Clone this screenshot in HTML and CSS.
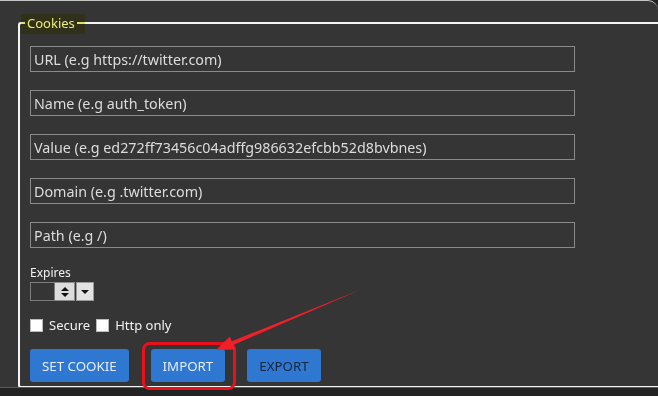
FILE: index.html
```html
<!DOCTYPE html>
<html lang="en">
<head>
  <meta charset="UTF-8">
  <meta name="viewport" content="width=device-width, initial-scale=1.0">
  <title>Cookies</title>
  <link rel="stylesheet" href="styles.css">
</head>
<body>
  <div class="panel">
    <fieldset class="cookies">
      <legend>Cookies</legend>
      <input class="field" type="text" placeholder="URL (e.g https://twitter.com)">
      <input class="field" type="text" placeholder="Name (e.g auth_token)">
      <input class="field" type="text" placeholder="Value (e.g ed272ff73456c04adffg986632efcbb52d8bvbnes)">
      <input class="field" type="text" placeholder="Domain (e.g .twitter.com)">
      <input class="field" type="text" placeholder="Path (e.g /)">

      <div class="expires">
        <label>Expires</label>
        <div class="datebox">
          <span class="date-value"></span>
          <span class="spin">
            <svg width="12" height="16" viewBox="0 0 12 16"><path d="M2 7 L6 3 L10 7 Z M2 9 L6 13 L10 9 Z" fill="#111"/></svg>
          </span>
          <span class="drop">
            <svg width="10" height="8" viewBox="0 0 10 8"><path d="M1 2 L5 6 L9 2 Z" fill="#111"/></svg>
          </span>
        </div>
      </div>

      <div class="checks">
        <label><span class="box"></span>Secure</label>
        <label><span class="box"></span>Http only</label>
      </div>

      <div class="actions">
        <button class="btn">SET COOKIE</button>
        <button class="btn">IMPORT</button>
        <button class="btn dark">EXPORT</button>
      </div>
    </fieldset>
    <div class="highlight"></div>
  </div>

  <svg class="annotation" width="658" height="396" viewBox="0 0 658 396">
    <rect x="143.5" y="343.5" width="91" height="45" rx="6" fill="none" stroke="#e8101a" stroke-width="3"/>
    <polygon points="216,350 229.9,336.6 231.8,341.3 362,289 233.4,344.9 235.3,349.6" fill="#f0202a"/>
  </svg>
</body>
</html>
```

FILE: styles.css
```css
body { margin: 0; background: #232323; overflow: hidden; font-family: "Noto Sans", "Open Sans", sans-serif; color: #f2f2f2; }
.panel { position: relative; height: 388px; box-sizing: border-box; overflow: hidden; background: #353535; border-top: 1px solid #c4c4c4; border-top-right-radius: 10px; border-bottom: 1px solid #5a5a5a; padding-top: 13px; }
.cookies { margin: 0 0 0 18px; width: 650px; height: 374px; box-sizing: border-box; border: 2px solid #f4f4f4; border-right: none; border-radius: 3px 0 0 3px; padding: 14px 10px 0 10px; }
.cookies legend { font-size: 13px; line-height: 18px; padding: 0 2px; margin-left: -5px; color: #fff; }
.highlight { position: absolute; left: 21px; top: 13px; width: 64px; height: 20px; background: #ecec78; mix-blend-mode: multiply; pointer-events: none; }
.field { display: block; width: 545px; height: 26px; box-sizing: border-box; margin: 0 0 18px 0; padding: 0 3px; background: #353535; border: 1px solid #8a8a8a; font-family: inherit; font-size: 14.3px; color: #ddd; }
.field::placeholder { color: #dcdcdc; }
.expires { margin-top: -2px; }
.expires label { display: block; font-size: 12px; line-height: 17px; }
.datebox { display: flex; margin-top: 1px; height: 19px; }
.date-value { width: 23px; border: 1px solid #7c7c7c; }
.spin { width: 19px; display: flex; align-items: center; justify-content: center; background: #dcdcdc; border: 1px solid #8c8c8c; border-left: none; }
.drop { width: 16px; margin-left: 1px; display: flex; align-items: center; justify-content: center; background: #e2e2e2; border: 1px solid #9a9a9a; }
.checks { display: flex; gap: 6px; margin-top: 17px; font-size: 13px; line-height: 15px; }
.checks label { display: flex; align-items: center; gap: 6px; }
.box { width: 13px; height: 13px; background: #fff; border: 1px solid #bbb; box-sizing: border-box; }
.actions { display: flex; gap: 22px; margin-top: 16px; }
.btn { height: 33px; padding: 0 12px; background: #2f78d2; border: none; border-radius: 3px; color: #e6edf7; font-family: inherit; font-size: 13.3px; }
.btn.dark { color: #16263d; }
.annotation { position: absolute; left: 0; top: 0; pointer-events: none; }
```
